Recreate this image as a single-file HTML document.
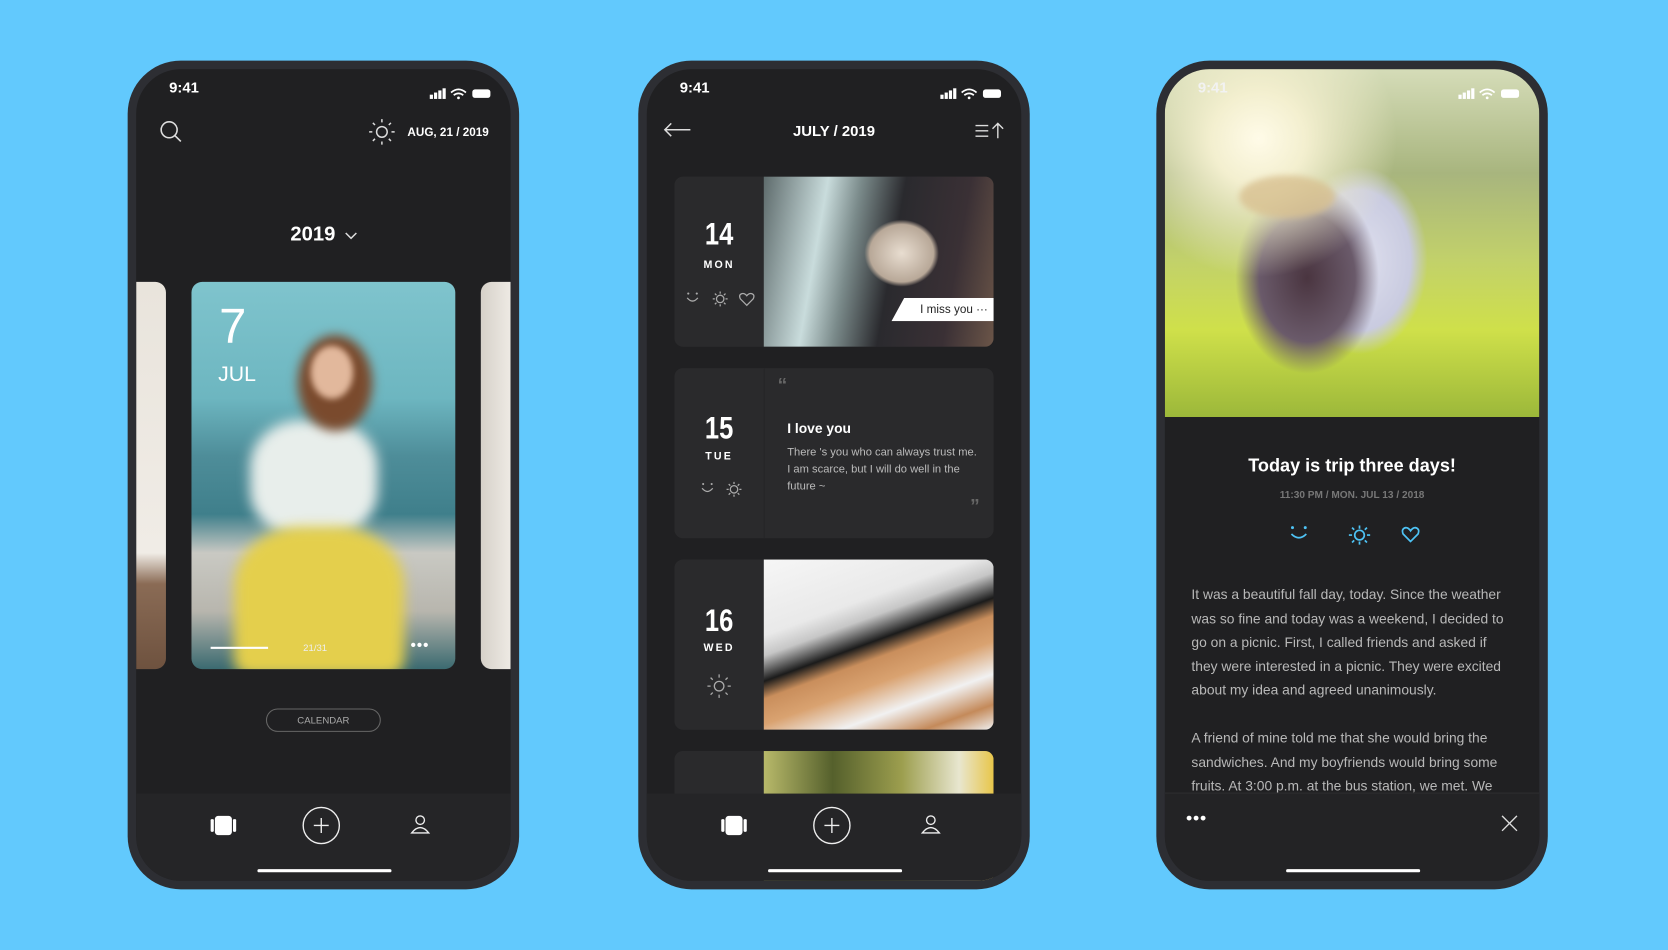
<!DOCTYPE html>
<html><head><meta charset="utf-8"><style>
*{margin:0;padding:0;box-sizing:border-box}
html,body{width:1668px;height:950px;overflow:hidden;background:#62c9fd}
#w{position:absolute;left:0;top:0;width:1568px;height:893px;transform:scale(1.06378);transform-origin:0 0;font-family:"Liberation Sans",sans-serif;color:#fff}
.ph{position:absolute;top:57px;width:368px;height:779px;border-radius:50px;background:#2d2e33}
.sc{position:absolute;left:8px;top:8px;right:8px;bottom:8px;border-radius:42px;background:#202022;overflow:hidden}
.a{position:absolute}
.st{font-size:14px;font-weight:bold}
.tab{position:absolute;left:0;right:0;top:681px;height:90px;background:#252527}
.hi{position:absolute;bottom:8px;left:114px;width:126px;height:3px;border-radius:2px;background:#fff}
.card{position:absolute;left:26px;width:300px;height:160px;border-radius:8px;background:#2a2a2c;overflow:hidden}
.dn{position:absolute;left:0;width:84px;text-align:center;font-family:"Liberation Sans Narrow","Liberation Sans",sans-serif;font-weight:bold}
.img{position:absolute;left:84px;top:0;right:0;bottom:0}
svg{position:absolute;overflow:visible}
</style></head><body><div id="w">

<!-- Phone 1 -->
<div class="ph" style="left:120px">
<div class="sc">
 <div class="a st" style="left:31px;top:9px">9:41</div>
 <svg style="left:276px;top:17px" width="60" height="12"><rect x="0" y="7" width="3" height="4" fill="#fff"/><rect x="4" y="5" width="3" height="6" fill="#fff"/><rect x="8" y="3" width="3" height="8" fill="#fff"/><rect x="12" y="1" width="3" height="10" fill="#fff"/><path d="M20 5 Q27 -1 34 5 M22.5 7.5 Q27 4 31.5 7.5" stroke="#fff" stroke-width="1.6" fill="none"/><circle cx="27" cy="10" r="1.3" fill="#fff"/><rect x="40" y="2" width="17" height="8" rx="2.5" fill="#fff"/></svg>
 <svg style="left:22px;top:48px" width="22" height="22"><circle cx="9" cy="9" r="7.5" stroke="#ddd" stroke-width="1.5" fill="none"/><path d="M14.5 14.5 L20 20" stroke="#ddd" stroke-width="1.5"/></svg>
 <svg style="left:219px;top:47px" width="24" height="24"><circle cx="12" cy="12" r="5" stroke="#ddd" stroke-width="1.4" fill="none"/><g stroke="#ddd" stroke-width="1.4"><path d="M12 0v3M12 21v3M0 12h3M21 12h3M3.5 3.5l2 2M18.5 18.5l2 2M3.5 20.5l2-2M18.5 5.5l2-2"/></g></svg>
 <div class="a" style="left:255px;top:54px;font-size:11px;font-weight:bold">AUG, 21 / 2019</div>
 <div class="a" style="left:145px;top:145px;font-size:19px;font-weight:bold">2019</div>
 <svg style="left:196px;top:153px" width="12" height="8"><path d="M1 1l5 5 5-5" stroke="#ddd" stroke-width="1.4" fill="none"/></svg>
 <div class="a" style="left:0;top:200px;width:28px;height:364px;border-radius:0 10px 10px 0;background:linear-gradient(180deg,#e9e4dc 0%,#f0ece6 70%,#8a6b55 78%,#6e523f 100%)"></div>
 <div class="a" style="left:324px;top:200px;width:28px;height:364px;border-radius:10px 0 0 10px;background:linear-gradient(90deg,#d6d1c9,#eeeae4)"></div>
 <div class="a" style="left:52px;top:200px;width:248px;height:364px;border-radius:10px;overflow:hidden;background:linear-gradient(180deg,#7fc4cd 0%,#6db6c0 30%,#4e8d99 45%,#3f7f8b 60%,#c9c9c3 70%,#b8b6ae 85%,#3b6a70 100%)">
  <div class="a" style="left:55px;top:130px;width:120px;height:110px;border-radius:40%;background:#e8eeeb;filter:blur(6px)"></div>
  <div class="a" style="left:100px;top:50px;width:70px;height:90px;border-radius:50%;background:#7a4a2d;filter:blur(5px)"></div>
  <div class="a" style="left:112px;top:60px;width:40px;height:50px;border-radius:50%;background:#e2b89c;filter:blur(3px)"></div>
  <div class="a" style="left:40px;top:230px;width:160px;height:140px;border-radius:40% 40% 10% 10%;background:#e4cf4c;filter:blur(6px)"></div>
  <div class="a" style="left:26px;top:18px;font-size:46px;font-weight:300;line-height:46px">7</div>
  <div class="a" style="left:25px;top:76px;font-size:20px;font-weight:300">JUL</div>
  <div class="a" style="left:18px;top:343px;width:54px;height:2px;background:#fff"></div>
  <div class="a" style="left:105px;top:339px;font-size:9px;color:#eee">21/31</div>
  <div class="a" style="left:206px;top:333px;font-size:14px;letter-spacing:1px;font-weight:bold">•••</div>
 </div>
 <div class="a" style="left:122px;top:601px;width:108px;height:22px;border:1px solid #666;border-radius:11px;font-size:9px;color:#aaa;text-align:center;line-height:20px">CALENDAR</div>
 <div class="tab">
  <svg style="left:70px;top:21px" width="24" height="18"><rect x="4" y="0" width="16" height="18" rx="3" fill="#fff"/><rect x="0" y="3" width="3" height="12" rx="1" fill="#fff"/><rect x="21" y="3" width="3" height="12" rx="1" fill="#fff"/></svg>
  <svg style="left:156px;top:12px" width="36" height="36"><circle cx="18" cy="18" r="17" stroke="#eee" stroke-width="1.3" fill="none"/><path d="M18 11v14M11 18h14" stroke="#eee" stroke-width="1.3"/></svg>
  <svg style="left:258px;top:20px" width="18" height="20"><circle cx="9" cy="5" r="4" stroke="#eee" stroke-width="1.3" fill="none"/><path d="M1 17 Q9 7 17 17 Z" stroke="#eee" stroke-width="1.3" fill="none"/></svg>
 </div>
 <div class="hi"></div>
</div></div>

<!-- Phone 2 -->
<div class="ph" style="left:600px">
<div class="sc">
 <div class="a st" style="left:31px;top:9px">9:41</div>
 <svg style="left:276px;top:17px" width="60" height="12"><rect x="0" y="7" width="3" height="4" fill="#fff"/><rect x="4" y="5" width="3" height="6" fill="#fff"/><rect x="8" y="3" width="3" height="8" fill="#fff"/><rect x="12" y="1" width="3" height="10" fill="#fff"/><path d="M20 5 Q27 -1 34 5 M22.5 7.5 Q27 4 31.5 7.5" stroke="#fff" stroke-width="1.6" fill="none"/><circle cx="27" cy="10" r="1.3" fill="#fff"/><rect x="40" y="2" width="17" height="8" rx="2.5" fill="#fff"/></svg>
 <svg style="left:16px;top:50px" width="26" height="14"><path d="M25 7H1M7 1L1 7l6 6" stroke="#ddd" stroke-width="1.4" fill="none"/></svg>
 <div class="a" style="left:0;width:352px;text-align:center;top:50px;font-size:14px;font-weight:bold">JULY / 2019</div>
 <svg style="left:309px;top:50px" width="28" height="16"><path d="M0 3h12M0 8h12M0 13h12M21 15V1M16 6l5-5 5 5" stroke="#ddd" stroke-width="1.3" fill="none"/></svg>
 <div class="card" style="top:101px">
  <div class="dn" style="top:40px;font-size:30px;line-height:30px;transform:scaleX(.8)">14</div>
  <div class="dn" style="top:78px;font-size:10px;letter-spacing:2px">MON</div>
  <svg style="left:11px;top:108px" width="64" height="14"><g stroke="#aaa" stroke-width="1.2" fill="none"><path d="M1 6 Q6 12 11 6"/><circle cx="32" cy="7" r="3.5"/><path d="M32 0v2M32 12v2M25 7h2M37 7h2M27 2l1.5 1.5M35.5 10.5l1.5 1.5M27 12l1.5-1.5M35.5 3.5L37 2"/><path d="M57 13 L51 7 Q49 3 52.5 2 Q55 1.5 57 4 Q59 1.5 61.5 2 Q65 3 63 7 Z"/></g><circle cx="2" cy="2" r="1" fill="#aaa"/><circle cx="10" cy="2" r="1" fill="#aaa"/></svg>
  <div class="img" style="background:radial-gradient(ellipse 50px 45px at 60% 45%,#e8ddd0,#b8a898 60%,transparent 70%),linear-gradient(100deg,#5e6b6c 0%,#c9dcdc 25%,#7a8a8a 38%,#2a2a2e 55%,#3a3035 80%,#6b5548 100%)"></div>
  <div class="a" style="left:204px;top:114px;width:100px;height:22px;background:#fff;clip-path:polygon(12% 0,100% 0,100% 100%,0 100%);color:#222;font-size:11px;line-height:22px;padding-left:27px">I miss you ···</div>
 </div>
 <div class="card" style="top:281px">
  <div class="a" style="left:84px;top:0;width:1px;height:160px;background:#262628"></div>
  <div class="dn" style="top:42px;font-size:30px;line-height:30px;transform:scaleX(.8)">15</div>
  <div class="dn" style="top:78px;font-size:10px;letter-spacing:2px">TUE</div>
  <svg style="left:25px;top:106px" width="40" height="16"><g stroke="#aaa" stroke-width="1.2" fill="none"><path d="M1 7 Q6 13 11 7"/><circle cx="31" cy="8" r="3.5"/><path d="M31 1v2M31 13v2M24 8h2M36 8h2M26 3l1.5 1.5M34.5 11.5l1.5 1.5M26 13l1.5-1.5M34.5 4.5L36 3"/></g><circle cx="2" cy="3" r="1" fill="#aaa"/><circle cx="10" cy="3" r="1" fill="#aaa"/></svg>
  <div class="a" style="left:97px;top:6px;font-size:18px;color:#666;font-weight:bold">“</div>
  <div class="a" style="left:106px;top:49px;font-size:13px;font-weight:bold">I love you</div>
  <div class="a" style="left:106px;top:71px;width:180px;font-size:10.5px;line-height:16px;color:#bbb">There 's you who can always trust me. I am scarce, but I will do well in the future ~</div>
  <div class="a" style="left:278px;top:120px;font-size:18px;color:#666;font-weight:bold">”</div>
 </div>
 <div class="card" style="top:461px">
  <div class="dn" style="top:43px;font-size:30px;line-height:30px;transform:scaleX(.8)">16</div>
  <div class="dn" style="top:78px;font-size:10px;letter-spacing:2px">WED</div>
  <svg style="left:30px;top:107px" width="24" height="24"><g stroke="#aaa" stroke-width="1.2" fill="none"><circle cx="12" cy="12" r="4.5"/><path d="M12 1v3M12 20v3M1 12h3M20 12h3M4 4l2 2M18 18l2 2M4 20l2-2M18 6l2-2"/></g></svg>
  <div class="img" style="background:linear-gradient(160deg,#f6f6f6 0%,#e9e9e9 30%,#c6c6c6 38%,#1b1b1b 48%,#c98e5c 55%,#d9a270 65%,#f1f1f1 78%,#c48a5a 90%,#efefef 100%)"></div>
 </div>
 <div class="card" style="top:641px">
  <div class="img" style="background:linear-gradient(90deg,#b8b96a,#55602c 30%,#9c9e4e 60%,#e8e6cf 85%,#e8c64a)"></div>
 </div>
 <div class="tab">
  <svg style="left:70px;top:21px" width="24" height="18"><rect x="4" y="0" width="16" height="18" rx="3" fill="#fff"/><rect x="0" y="3" width="3" height="12" rx="1" fill="#fff"/><rect x="21" y="3" width="3" height="12" rx="1" fill="#fff"/></svg>
  <svg style="left:156px;top:12px" width="36" height="36"><circle cx="18" cy="18" r="17" stroke="#eee" stroke-width="1.3" fill="none"/><path d="M18 11v14M11 18h14" stroke="#eee" stroke-width="1.3"/></svg>
  <svg style="left:258px;top:20px" width="18" height="20"><circle cx="9" cy="5" r="4" stroke="#eee" stroke-width="1.3" fill="none"/><path d="M1 17 Q9 7 17 17 Z" stroke="#eee" stroke-width="1.3" fill="none"/></svg>
 </div>
 <div class="hi"></div>
</div></div>

<!-- Phone 3 -->
<div class="ph" style="left:1087px">
<div class="sc">
 <div class="a" style="left:0;top:0;width:352px;height:327px;background:radial-gradient(circle at 25% 20%,#fffbe8 0%,#f3efcf 12%,transparent 35%),radial-gradient(ellipse 90px 120px at 38% 60%,#4a3540 0%,#6a5a6a 50%,transparent 75%),radial-gradient(ellipse 80px 110px at 52% 55%,#dfe0ee,#c9cbe0 60%,transparent 80%),linear-gradient(180deg,#d5dcb8 0%,#a8b57e 30%,#c2d16a 55%,#cfe04a 75%,#9cb83a 100%)"></div>
 <div class="a" style="left:70px;top:100px;width:90px;height:40px;border-radius:50%;background:#d8c090;opacity:.8;filter:blur(3px)"></div>
 <div class="a st" style="left:31px;top:9px;color:#f2f2f2">9:41</div>
 <svg style="left:276px;top:17px" width="60" height="12"><rect x="0" y="7" width="3" height="4" fill="#fff"/><rect x="4" y="5" width="3" height="6" fill="#fff"/><rect x="8" y="3" width="3" height="8" fill="#fff"/><rect x="12" y="1" width="3" height="10" fill="#fff"/><path d="M20 5 Q27 -1 34 5 M22.5 7.5 Q27 4 31.5 7.5" stroke="#fff" stroke-width="1.6" fill="none"/><circle cx="27" cy="10" r="1.3" fill="#fff"/><rect x="40" y="2" width="17" height="8" rx="2.5" fill="#fff"/></svg>
 <div class="a" style="left:0;width:352px;text-align:center;top:363px;font-size:17px;font-weight:bold">Today is trip three days!</div>
 <div class="a" style="left:0;width:352px;text-align:center;top:395px;font-size:9.5px;font-weight:bold;color:#777">11:30 PM / MON. JUL 13 / 2018</div>
 <svg style="left:117px;top:428px" width="120" height="20"><g stroke="#4ec3f5" stroke-width="1.6" fill="none"><path d="M2 9 Q9 16 16 9"/><circle cx="66" cy="10" r="4.5"/><path d="M66 1v3M66 16v3M56 10h3M73 10h3M59 3l2 2M71 15l2 2M59 17l2-2M71 5l2-2"/><path d="M114 16 L107 9 Q105 4 109.5 3 Q112 3 114 6 Q116 3 118.5 3 Q123 4 121 9 Z"/></g><circle cx="3" cy="3" r="1.4" fill="#4ec3f5"/><circle cx="15" cy="3" r="1.4" fill="#4ec3f5"/></svg>
 <div class="a" style="left:25px;top:483px;width:305px;font-size:13px;line-height:22.5px;color:#b8b8b8">It was a beautiful fall day, today. Since the weather was so fine and today was a weekend, I decided to go on a picnic. First, I called friends and asked if they were interested in a picnic. They were excited about my idea and agreed unanimously.<br><br>A friend of mine told me that she would bring the sandwiches. And my boyfriends would bring some fruits. At 3:00 p.m. at the bus station, we met. We</div>
 <div class="tab" style="top:680px;background:#232325;border-top:1px solid #2e2e30">
  <div class="a" style="left:20px;top:15px;font-size:16px;font-weight:bold;letter-spacing:1px">•••</div>
  <svg style="left:316px;top:20px" width="16" height="16"><path d="M1 1l14 14M15 1L1 15" stroke="#ddd" stroke-width="1.3"/></svg>
 </div>
 <div class="hi" style="left:114px"></div>
</div></div>

</div></body></html>
